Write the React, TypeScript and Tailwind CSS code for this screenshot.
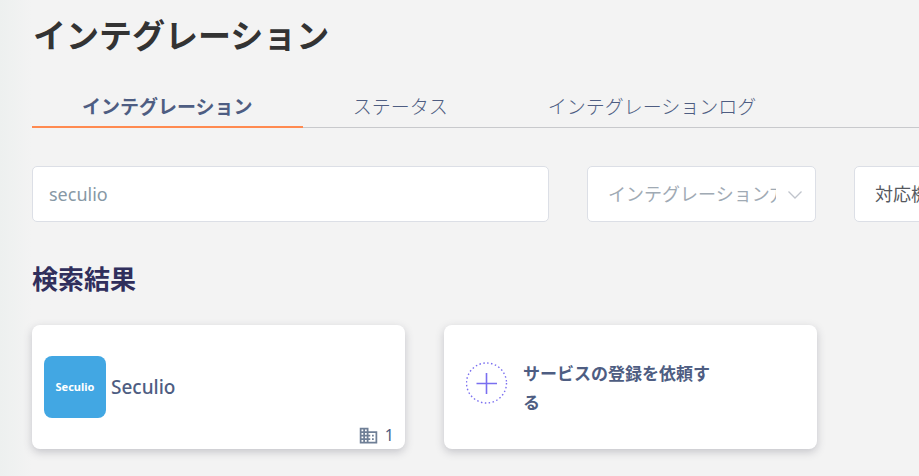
import { MdBusiness } from "react-icons/md";

const tabs = [
  { label: "インテグレーション", active: true },
  { label: "ステータス", active: false },
  { label: "インテグレーションログ", active: false },
];

const fieldBox =
  "h-14 w-full rounded-[5px] border border-[#dcdfe6] bg-white text-lg outline-none";

const cardBox = "flex h-[124px] rounded-lg bg-white shadow-[0_3px_8px_rgba(60,60,80,0.25)]";

export default function App() {
  return (
    <div className="min-h-screen overflow-hidden bg-[#f3f3f3] bg-[linear-gradient(90deg,#edf0ef,#f3f3f3_32px)] pl-8 font-['Noto_Sans','Noto_Sans_CJK_JP',sans-serif] text-[#4e5d82]">
      <main className="min-w-[1197px] pb-7">
        <h1 className="pt-3 pl-px text-[33px] leading-[48px] font-bold text-[#333]">
          インテグレーション
        </h1>

        <nav className="mt-6 flex h-11 border-b border-[#c8c9cc]" aria-label="メニュー">
          {tabs.map((tab) => (
            <a
              key={tab.label}
              href="#"
              aria-current={tab.active ? "page" : undefined}
              className={
                tab.active
                  ? "-mb-px flex items-center border-b-2 border-[#ff8a50] px-[50px] pt-1 text-[19px] font-bold"
                  : "flex items-center px-[50px] pt-1 text-[19px] font-light"
              }
            >
              {tab.label}
            </a>
          ))}
        </nav>

        <form className="mt-[38px] grid grid-cols-[517fr_229fr_375fr] gap-[38px]">
          <input
            type="text"
            aria-label="検索"
            defaultValue="seculio"
            className={`${fieldBox} px-4 text-[#8798a5]`}
          />
          <div className="relative">
            <select
              aria-label="インテグレーション方法"
              className={`${fieldBox} appearance-none pr-[39px] pl-5 text-[#a0aab4]`}
            >
              <option>インテグレーション方法</option>
            </select>
            <svg
              viewBox="0 0 14 8"
              className="pointer-events-none absolute top-[25px] right-[14px] h-2 w-[14px]"
              fill="none"
              stroke="#c0c4cc"
              strokeWidth="1.3"
            >
              <path d="M0.5 0.5 7 7 13.5 0.5" />
            </svg>
          </div>
          <select
            aria-label="対応機能"
            className={`${fieldBox} appearance-none pr-10 pl-5 text-[#55585e]`}
          >
            <option>対応機能</option>
          </select>
        </form>

        <h2 className="mt-[37px] text-[26px] leading-10 font-bold text-[#302f5c]">検索結果</h2>

        <section className="mt-[26px] grid grid-cols-3 gap-[39px]">
          <article className={`${cardBox} flex-col px-[11px]`}>
            <div className="mt-[31px] ml-px flex items-center gap-[5px]">
              <div className="flex size-[62px] items-center justify-center rounded-lg bg-[#42a7e3] text-[11px] font-bold text-white">
                Seculio
              </div>
              <h3 className="text-[19px] font-medium">Seculio</h3>
            </div>
            <div className="mt-[5px] flex items-center justify-end gap-1.5 text-base">
              <MdBusiness className="size-[21px] text-[#6f7f96]" />
              <span>1</span>
            </div>
          </article>

          <button type="button" className={`${cardBox} items-center pl-[22px] text-left`}>
            <svg viewBox="0 0 42 42" className="mb-2 size-[42px]" fill="none" stroke="#7a6ff0">
              <circle cx="20.5" cy="21" r="20" strokeWidth="1.4" strokeDasharray="1.5 2.43" />
              <path d="M20.5 11v21M10.5 21.5h20.5" strokeWidth="1.6" />
            </svg>
            <span className="ml-[15px] w-48 pt-0.5 text-[17px] leading-[29px] font-bold">
              サービスの登録を依頼する
            </span>
          </button>
        </section>
      </main>
    </div>
  );
}
